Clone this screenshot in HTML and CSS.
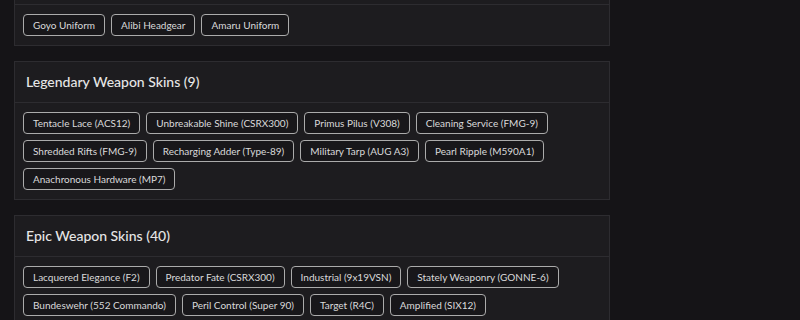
FILE: index.html
```html
<!DOCTYPE html>
<html>
<head>
<meta charset="utf-8">
<link rel="stylesheet" href="styles.css">
</head>
<body>
<div class="list">
  <section class="card">
    <div class="card-head"><h2 class="title">Epic Cosmetics (3)</h2></div>
    <div class="card-body">
      <span class="tag">Goyo Uniform</span>
      <span class="tag">Alibi Headgear</span>
      <span class="tag">Amaru Uniform</span>
    </div>
  </section>
  <section class="card">
    <div class="card-head"><h2 class="title">Legendary Weapon Skins (9)</h2></div>
    <div class="card-body">
      <span class="tag">Tentacle Lace (ACS12)</span>
      <span class="tag">Unbreakable Shine (CSRX300)</span>
      <span class="tag">Primus Pilus (V308)</span>
      <span class="tag">Cleaning Service (FMG-9)</span>
      <span class="tag">Shredded Rifts (FMG-9)</span>
      <span class="tag">Recharging Adder (Type-89)</span>
      <span class="tag">Military Tarp (AUG A3)</span>
      <span class="tag">Pearl Ripple (M590A1)</span>
      <span class="tag">Anachronous Hardware (MP7)</span>
    </div>
  </section>
  <section class="card">
    <div class="card-head"><h2 class="title">Epic Weapon Skins (40)</h2></div>
    <div class="card-body">
      <span class="tag">Lacquered Elegance (F2)</span>
      <span class="tag">Predator Fate (CSRX300)</span>
      <span class="tag">Industrial (9x19VSN)</span>
      <span class="tag">Stately Weaponry (GONNE-6)</span>
      <span class="tag">Bundeswehr (552 Commando)</span>
      <span class="tag">Peril Control (Super 90)</span>
      <span class="tag">Target (R4C)</span>
      <span class="tag">Amplified (SIX12)</span>
    </div>
  </section>
</div>
</body>
</html>
```
FILE: styles.css
```css
html, body {
  margin: 0;
  padding: 0;
  background: #151417;
  height: 100%;
  overflow: hidden;
}
body {
  font-family: Lato, "Open Sans", sans-serif;
  color: #dcdcdc;
}
.list {
  width: 596px;
  margin: -37px 0 0 14px;
  display: flex;
  flex-direction: column;
  gap: 15px;
}
.card {
  background: #1d1c1f;
  border: 1px solid #2d2c30;
  box-sizing: border-box;
}
.card-head {
  height: 40px;
  display: flex;
  align-items: center;
  padding: 0 11px;
  border-bottom: 1px solid #2d2c30;
}
.title {
  margin: 0 0 1px;
  font-size: 14px;
  font-weight: 500;
  color: #e6e6e6;
}
.card-body {
  display: flex;
  flex-wrap: wrap;
  gap: 6px;
  padding: 9px 8px 9px;
}
.tag {
  display: inline-flex;
  align-items: center;
  height: 22px;
  box-sizing: border-box;
  padding: 0 9px;
  border: 1px solid #ababab;
  border-radius: 4px;
  background: #18171a;
  font-size: 10px;
  font-weight: 400;
  color: #dadada;
  white-space: nowrap;
}
```
